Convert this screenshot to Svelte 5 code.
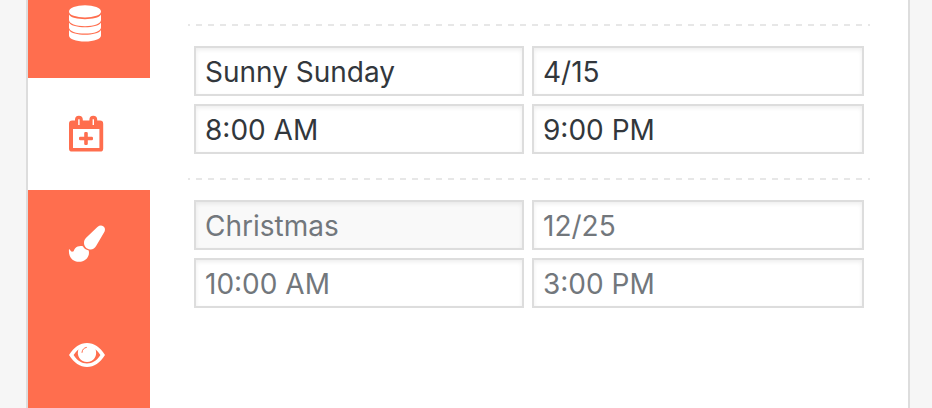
<script>
  let active = $state('hours');

  let holidays = $state([
    { id: 'sunday', name: 'Sunny Sunday', date: '4/15', opens: '8:00 AM', closes: '9:00 PM' },
    { id: 'new', name: '', date: '', opens: '', closes: '' }
  ]);

  const tabs = [
    { id: 'data', label: 'Data' },
    { id: 'hours', label: 'Holidays' },
    { id: 'style', label: 'Appearance' },
    { id: 'view', label: 'Preview' }
  ];

  const fields = [
    { key: 'name', label: 'Name', hint: 'Christmas' },
    { key: 'date', label: 'Date', hint: '12/25' },
    { key: 'opens', label: 'Opens', hint: '10:00 AM' },
    { key: 'closes', label: 'Closes', hint: '3:00 PM' }
  ];
</script>

<div class="page">
  <main class="panel">
    <nav class="tabs" aria-label="Sections">
      {#each tabs as tab (tab.id)}
        <button
          type="button"
          class="tab"
          class:active={active === tab.id}
          aria-label={tab.label}
          onclick={() => (active = tab.id)}
        >
          <svg viewBox="0 0 40 40" width="40" height="40" aria-hidden="true">
            {#if tab.id === 'data'}
              <ellipse cx="19" cy="9.4" rx="16" ry="6.2" />
              <path d="M3 12.6C5 16 11.5 17.2 19 17.2S33 16 35 12.6V18C35 21.6 28 24.2 19 24.2S3 21.6 3 18Z" />
              <path d="M3 20.6C5 23.9 11.5 25.3 19 25.3S33 23.9 35 20.6V25.4C35 29 28 31.6 19 31.6S3 29 3 25.4Z" />
              <path d="M3 28C5 31.3 11.5 32.7 19 32.7S33 31.3 35 28V33.6C35 37.2 28 39.6 19 39.6S3 37.2 3 33.6Z" />
            {:else if tab.id === 'hours'}
              <path
                fill-rule="evenodd"
                d="M6 6.6H9V5.6A3.9 3.9 0 0 1 16.8 5.6V6.6H23.4V5.6A3.9 3.9 0 0 1 31.2 5.6V6.6H34A3.2 3.2 0 0 1 37.2 9.8V34.4A3.2 3.2 0 0 1 34 37.6H6.2A3.2 3.2 0 0 1 3 34.4V9.8A3.2 3.2 0 0 1 6.2 6.6ZM7 15V34H33.4V15ZM12.2 5.2V11H13.6V5.2ZM26.6 5.2V11H28V5.2Z"
              />
              <path
                d="M18.2 19.2A1.2 1.2 0 0 1 19.4 18H20.6A1.2 1.2 0 0 1 21.8 19.2V22.8H25.8A1.2 1.2 0 0 1 27 24V25A1.2 1.2 0 0 1 25.8 26.2H21.8V29.8A1.2 1.2 0 0 1 20.6 31H19.4A1.2 1.2 0 0 1 18.2 29.8V26.2H14.2A1.2 1.2 0 0 1 13 25V24A1.2 1.2 0 0 1 14.2 22.8H18.2Z"
              />
            {:else if tab.id === 'style'}
              <path d="M31.4 1C33.4 -0.7 35.6 -0.9 37.2 0.3C39 1.6 39.4 3.6 38.6 5.4L30.4 19.4C28.8 22.2 26.6 23.7 24 23.4C20.6 23 18.2 20.4 18 17.2C17.9 15 18.8 13.3 20.4 11.6Z" />
              <path d="M16.9 20.3C18 22.4 19.8 24 22.7 24.4C24.2 30.6 19.6 35.8 13 35.8C6.2 35.8 2.2 30.6 3 23C4.6 23.8 5 26.4 7 25.6C8.2 25.1 7.8 23.6 9 22.4C11.2 20.2 14 19.6 16.9 20.3Z" />
            {:else}
              <path
                fill-rule="evenodd"
                d="M3 17C8 9 14 4.9 21 4.9S34 9 39 17C34 25 28 28.9 21 28.9S8 25 3 17ZM7.6 17C11.2 22.6 15.6 25.5 21 25.5S30.8 22.6 34.4 17C33 14.8 31.4 12.9 29.5 11.3A9.2 9.2 0 1 1 12.5 11.3C10.6 12.9 9 14.8 7.6 17Z"
              />
              <path class="glint" d="M16 14.4C16.1 11.6 18 9.8 20.4 9.4" />
            {/if}
          </svg>
        </button>
      {/each}
    </nav>

    <form class="content">
      {#each holidays as holiday (holiday.id)}
        <div class="entry">
          {#each fields as field (field.key)}
            <input
              type="text"
              class:muted={field.key === 'name' && !holiday.name}
              aria-label={field.label}
              placeholder={field.hint}
              bind:value={holiday[field.key]}
            />
          {/each}
        </div>
      {/each}
    </form>
  </main>
</div>

<style>
  .page {
    box-sizing: border-box;
    height: 100vh;
    overflow: hidden;
    padding: 0 22px 0 26px;
    background: #f6f6f6;
    font-family: Inter, Roboto, sans-serif;
  }

  .panel {
    display: flex;
    box-sizing: border-box;
    min-height: 100%;
    border: solid #ddd;
    border-width: 0 2px;
    background: #fff;
  }

  .tabs {
    flex: 0 0 122px;
    margin-top: -34px;
    background: #ff6e4e;
  }

  .tab {
    display: flex;
    align-items: center;
    width: 100%;
    height: 112px;
    padding: 0 0 0 38px;
    border: 0;
    background: transparent;
    color: #fff;
    cursor: pointer;
  }

  .tab.active {
    background: #fff;
    color: #ff6e4e;
  }

  .tab svg {
    display: block;
    fill: currentColor;
    overflow: visible;
  }

  .tab .glint {
    fill: none;
    stroke: #ff6e4e;
    stroke-width: 1;
    stroke-linecap: round;
  }

  .content {
    flex: 1;
    min-width: 0;
    padding: 24px 38px;
  }

  .entry {
    display: grid;
    grid-template-columns: 330fr 332fr;
    gap: 8px;
    padding: 22px 6px 24px;
    background: repeating-linear-gradient(90deg, #e7e7e7 0 2px, transparent 2px 8px, #e7e7e7 8px 12px)
      top / 100% 2px no-repeat;
  }

  input {
    box-sizing: border-box;
    width: 100%;
    min-width: 0;
    height: 50px;
    margin: 0;
    padding: 2px 9px 0;
    border: 2px solid #ddd;
    border-radius: 0;
    outline: 0;
    background: #fff;
    box-shadow: inset 0 2px 4px rgba(0, 0, 0, 0.07);
    color: #32373c;
    font: 400 28px Inter, Roboto, sans-serif;
  }

  input::placeholder {
    color: #72777c;
    opacity: 1;
  }

  input.muted {
    background: #f9f9f9;
  }
</style>
